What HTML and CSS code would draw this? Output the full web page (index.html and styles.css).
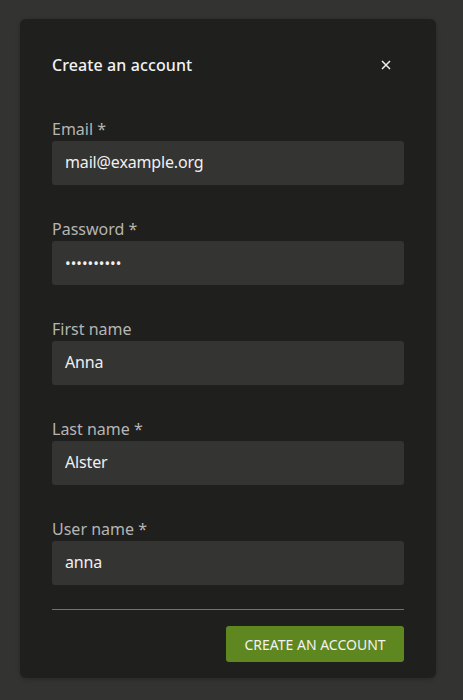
FILE: index.html
```html
<!DOCTYPE html>
<html>
<head>
<meta charset="utf-8">
<link rel="stylesheet" href="styles.css">
</head>
<body>
<div class="dialog">
  <div class="header">
    <h1 class="title">Create an account</h1>
    <button class="close" aria-label="Close">
      <svg width="10" height="10" viewBox="0 0 10 10"><path d="M1 1L9 9M9 1L1 9" stroke="#f0f0f0" stroke-width="1.5" fill="none"/></svg>
    </button>
  </div>
  <form class="form">
    <div class="field">
      <label class="label">Email *</label>
      <div class="input">mail@example.org</div>
    </div>
    <div class="field">
      <label class="label">Password *</label>
      <div class="input pw">••••••••••</div>
    </div>
    <div class="field">
      <label class="label">First name</label>
      <div class="input">Anna</div>
    </div>
    <div class="field">
      <label class="label">Last name *</label>
      <div class="input">Alster</div>
    </div>
    <div class="field">
      <label class="label">User name *</label>
      <div class="input">anna</div>
    </div>
    <div class="footer">
      <button type="button" class="submit">CREATE AN ACCOUNT</button>
    </div>
  </form>
</div>
</body>
</html>
```
FILE: styles.css
```css
* { box-sizing: border-box; }
html, body { margin: 0; padding: 0; background: #333332; }
body {
  font-family: "Noto Sans", "Open Sans", sans-serif;
  padding: 19px 27px 0 20px;
  height: 700px;
  overflow: hidden;
}
.dialog {
  width: 416px;
  height: 659px;
  background: #1f1f1e;
  border-radius: 6px;
  padding: 0 32px;
  box-shadow: 0 1px 4px rgba(0,0,0,0.25);
}
.header {
  height: 90px;
  display: flex;
  align-items: center;
  justify-content: space-between;
  padding-top: 2px;
}
.title {
  margin: 0;
  font-size: 16px;
  font-weight: 500;
  color: #f2f2f2;
  letter-spacing: 0.1px;
}
.close {
  background: none;
  border: 0;
  padding: 0;
  width: 10px;
  height: 10px;
  margin-right: 13px;
  display: flex;
}
.form { display: flex; flex-direction: column; }
.field { display: flex; flex-direction: column; margin-top: 10px; }
.field + .field { margin-top: 34px; }
.label {
  font-size: 16px;
  line-height: 20px;
  color: #b5b5b3;
  margin-bottom: 2px;
}
.input {
  height: 44px;
  background: #343433;
  border-radius: 3px;
  padding: 0 13px 2px;
  display: flex;
  align-items: center;
  font-size: 16px;
  color: #f0f0f0;
  letter-spacing: -0.15px;
}
.input.pw { font-size: 15px; letter-spacing: 0; padding-bottom: 1px; }
.footer {
  margin-top: 24px;
  border-top: 1px solid #737372;
  padding-top: 16px;
  display: flex;
  justify-content: flex-end;
}
.submit {
  width: 178px;
  height: 36px;
  background: #5f8720;
  border: 0;
  border-radius: 3px;
  color: #f2f2f2;
  font-family: inherit;
  font-size: 14px;
  padding: 0;
}
```
